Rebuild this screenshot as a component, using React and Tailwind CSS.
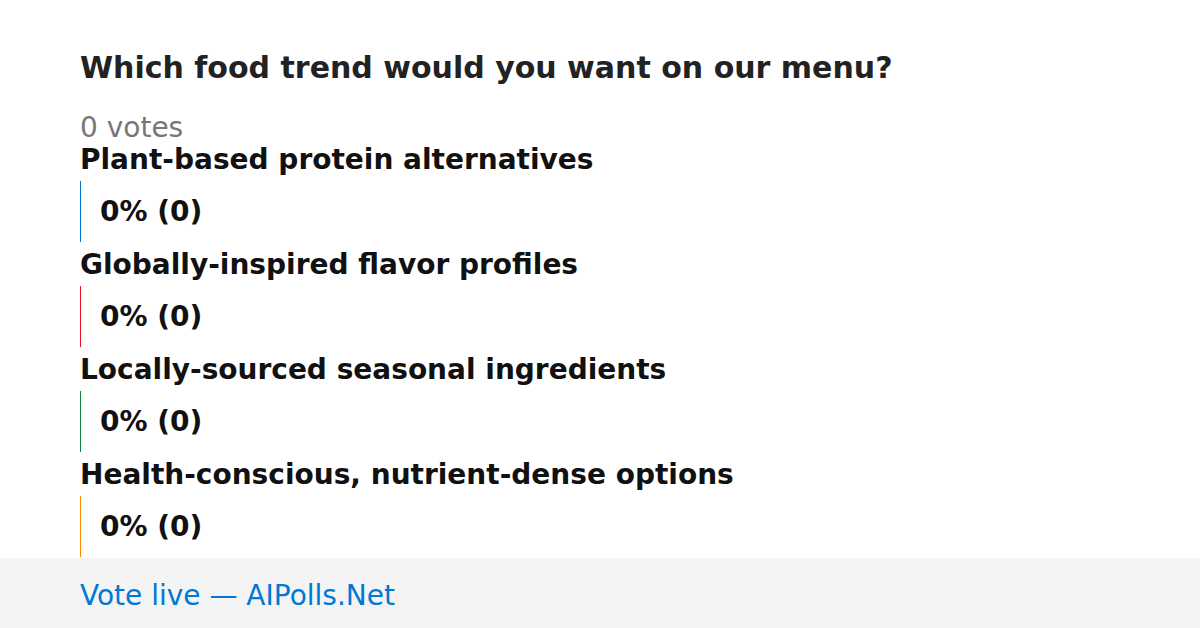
const options = [
  { label: 'Plant-based protein alternatives', color: 'border-[#0078d4]' },
  { label: 'Globally-inspired flavor profiles', color: 'border-[#e81123]' },
  { label: 'Locally-sourced seasonal ingredients', color: 'border-[#10893e]' },
  { label: 'Health-conscious, nutrient-dense options', color: 'border-[#ff8c00]' },
]

export default function App() {
  return (
    <div className="w-[1200px] h-[628px] bg-white flex flex-col overflow-hidden" style={{ fontFamily: '"DejaVu Sans", sans-serif' }}>
      <main className="flex-1 min-h-0 overflow-hidden px-[80px] pt-[50px]">
        <h1 className="text-[30px] leading-[36px] font-bold text-[#222]">Which food trend would you want on our menu?</h1>
        <div className="mt-[27px] text-[28px] leading-[29px] text-[#777]">0 votes</div>
        {options.map((o) => (
          <div key={o.label}>
            <div className="text-[28px] leading-[36px] font-bold text-[#111]">{o.label}</div>
            <div className={`mt-[3px] mb-[5px] h-[61px] border-l ${o.color} flex items-center pl-[19px]`}>
              <span className="text-[28px] leading-[36px] font-bold text-[#111]">0% (0)</span>
            </div>
          </div>
        ))}
      </main>
      <footer className="h-[70px] shrink-0 bg-[#f4f4f4] px-[80px] pt-[20px]">
        <span className="text-[28px] leading-[36px] text-[#0078d4]">Vote live — AIPolls.Net</span>
      </footer>
    </div>
  )
}
